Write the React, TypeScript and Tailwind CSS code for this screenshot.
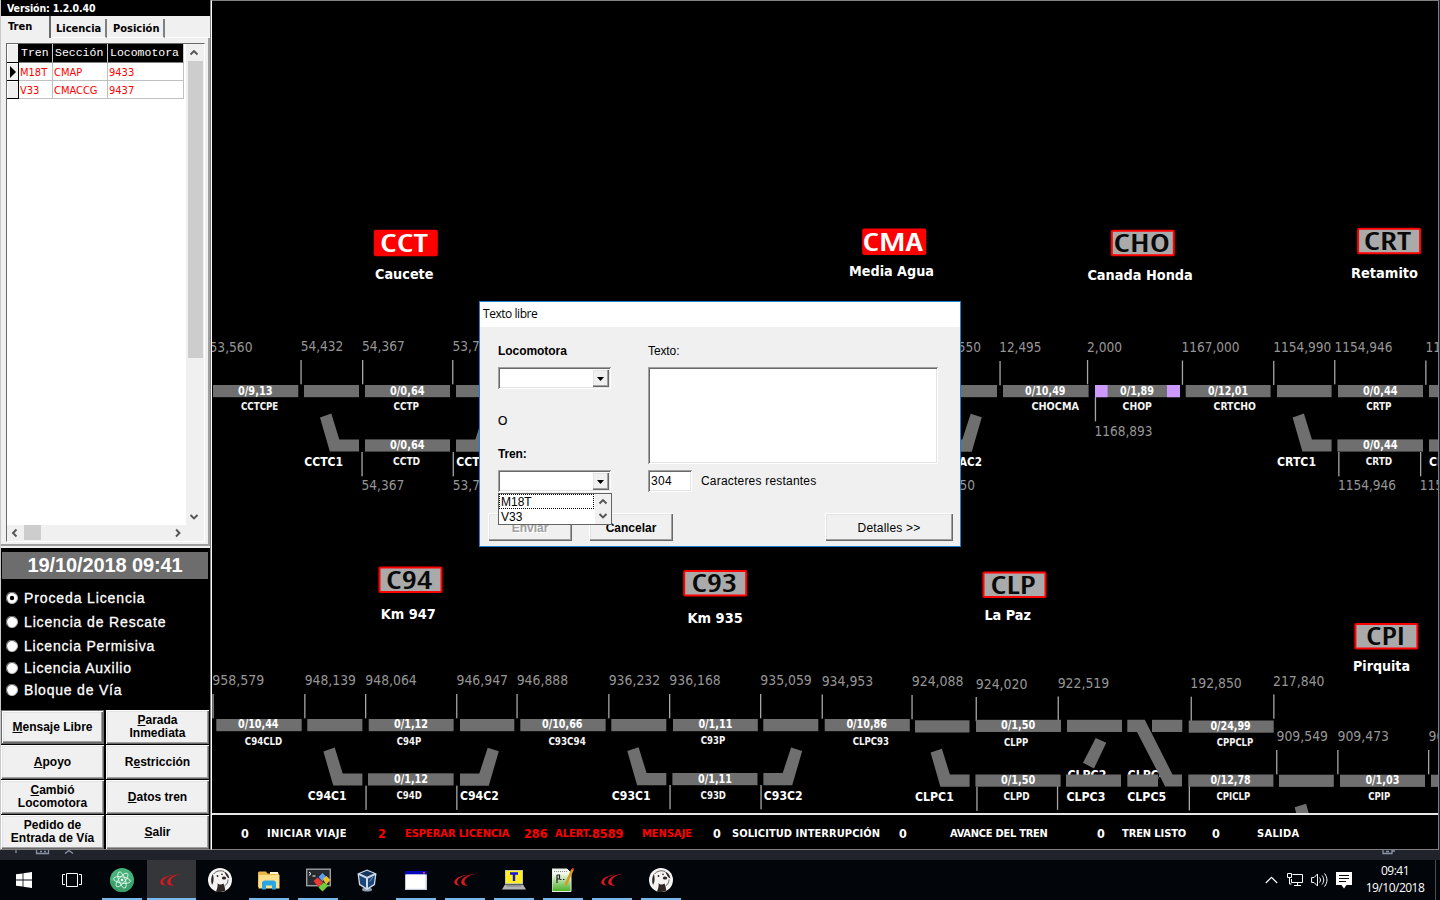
import React from "react";

const TAHOMA = "font-['DejaVu_Sans_Condensed','DejaVu_Sans',sans-serif] [font-stretch:condensed]";
const ARIAL = "font-['Liberation_Sans',Arial,sans-serif]";
const RAISED =
  "shadow-[inset_1px_1px_0_#fff,inset_-1px_-1px_0_#696969,inset_-2px_-2px_0_#a0a0a0,inset_2px_2px_0_#e3e3e3]";
const SUNKEN =
  "shadow-[inset_1px_1px_0_#a0a0a0,inset_-1px_-1px_0_#fff,inset_2px_2px_0_#696969,inset_-2px_-2px_0_#e3e3e3]";

/* ---------- track diagram ---------- */

type Txt = [string, number, number, number];

const marks: Txt[] = [
  ["53,560", 209.5, 352, 43], ["54,432", 300.7, 351.7, 42.7], ["54,367", 362, 351.7, 42.7], ["53,700", 452.5, 351.7, 42.7],
  ["12,550", 938.5, 352, 42.5], ["12,495", 999.3, 352.5, 42], ["2,000", 1087, 352, 35], ["1167,000", 1181.5, 352.3, 58],
  ["1154,990", 1273.3, 352.3, 58], ["1154,946", 1334.5, 351.8, 58], ["1152,880", 1425.5, 351.8, 58],
  ["1168,893", 1094.5, 436.6, 58], ["54,367", 361.5, 490.6, 42.7], ["53,700", 452.8, 490.6, 42.7],
  ["12,550", 932.5, 490.3, 42.5], ["1154,946", 1338, 490.3, 58], ["1152,880", 1419.8, 490.3, 58],
  ["958,579", 212.3, 685.3, 52], ["948,139", 304.7, 685.3, 51.2], ["948,064", 365.3, 685.3, 51.5], ["946,947", 456.5, 685.3, 51.5],
  ["946,888", 516.7, 685.3, 51.5], ["936,232", 608.7, 685.3, 51.5], ["936,168", 669.3, 685.3, 51.5], ["935,059", 760.3, 685.3, 51.5],
  ["934,953", 821.7, 685.8, 51.5], ["924,088", 911.7, 686.6, 51.8], ["924,020", 975.7, 688.8, 51.8], ["922,519", 1057.7, 688.4, 51.5],
  ["192,850", 1190.3, 688.4, 51.5], ["217,840", 1273, 685.8, 51.5], ["909,549", 1276.5, 741.5, 51.5], ["909,473", 1337.5, 741.2, 51.5],
  ["908,440", 1428.5, 741.2, 51.5],
];

const ticks: [number, number][] = [
  [301, 360], [362.6, 360], [452.7, 360], [1000, 361], [1087.5, 360], [1182.4, 360.5], [1273.7, 360.8], [1334.7, 360], [1425.8, 360.5],
  [1095.4, 397], [362, 452], [453.2, 452], [1338.8, 452], [1420.6, 452],
  [213, 694], [304.8, 694], [365.6, 694], [456.7, 694], [517, 694], [608.8, 694], [669.6, 694], [760.6, 694], [822.2, 694.4],
  [912, 695], [976.2, 697], [1058.2, 696.5], [1191.2, 696.7], [1273.8, 694.4], [1276.7, 750], [1337.8, 750], [1428.6, 750],
  [366, 785.6], [456.8, 785.6], [670, 785], [761, 785], [976.9, 786.6], [1057.5, 785.5], [1189.3, 786],
];

const bars: [number, number, number][] = [
  [213, 298.3, 385], [304, 359, 385], [365, 450, 385], [456, 511, 385], [930, 997, 385], [1003, 1088.6, 385], [1095, 1180, 385],
  [1185.7, 1270.6, 385], [1277, 1331.6, 385], [1338, 1423, 385], [1429, 1440, 385],
  [365, 450, 439.4], [1337.4, 1423, 439.4], [1429, 1440, 439.4],
  [216.3, 301.7, 719], [307.3, 362.4, 719], [368.7, 453.6, 719], [460, 514.3, 719], [520.3, 605.6, 719], [611.3, 666.3, 719],
  [673, 757.8, 719], [763.3, 818.3, 719], [824.7, 909.8, 719], [915, 969.5, 720.3], [976, 1061, 719.8], [1067, 1122, 719.8],
  [1152, 1182.3, 719.8], [1188.7, 1273.7, 720.5],
  [368, 453.6, 773.3], [672.4, 757.5, 773], [975.4, 1060.6, 774.5], [1066, 1121, 774.5], [1127.3, 1158, 774.5],
  [1188.3, 1273.4, 774.5], [1279, 1333.8, 774.7], [1340, 1425, 774.7], [1431, 1440, 774.7],
];

const amounts: Txt[] = [
  ["0/9,13", 238, 394.8, 34.5], ["0/0,64", 390, 394.8, 34.5], ["0/10,49", 1025, 394.8, 40.5], ["0/1,89", 1120, 394.8, 34],
  ["0/12,01", 1208, 394.8, 40], ["0/0,44", 1363, 394.8, 34.5], ["0/0,64", 390, 449.2, 34.5], ["0/0,44", 1363, 449.2, 34.5],
  ["0/10,44", 238, 728.6, 40.5], ["0/1,12", 394, 728.6, 34], ["0/10,66", 542, 728.6, 40.5], ["0/1,11", 698.4, 728.4, 34],
  ["0/10,86", 846.4, 728.6, 40.5], ["0/1,50", 1001, 729.6, 34.3], ["0/24,99", 1210.4, 730.2, 40.3], ["0/1,12", 394, 783, 34],
  ["0/1,11", 698, 783, 34], ["0/1,50", 1001, 784, 34.3], ["0/12,78", 1210.4, 784.2, 40.3], ["0/1,03", 1365.4, 784.2, 34],
];

const sections: Txt[] = [
  ["CCTCPE", 241, 410.7, 37.3], ["CCTP", 393.6, 410.7, 25.4], ["CHOCMA", 1031.4, 410.6, 47.6], ["CHOP", 1122.6, 410.6, 29.2],
  ["CRTCHO", 1213.6, 410.6, 42.2], ["CRTP", 1366.2, 410.6, 25.2], ["CCTD", 393, 465.2, 27.2], ["CRTD", 1365.8, 465, 26.4],
  ["C94CLD", 244.8, 744.8, 37.5], ["C94P", 396.8, 744.8, 24.4], ["C93C94", 548.4, 744.8, 37.4], ["C93P", 700.8, 744.6, 24.4],
  ["CLPC93", 852.8, 744.8, 36.2], ["CLPP", 1004, 745.8, 24.2], ["CPPCLP", 1216.8, 746.2, 36.4], ["C94D", 396.4, 799.2, 25.4],
  ["C93D", 700.6, 799, 25.4], ["CLPD", 1003.6, 800.2, 26], ["CPICLP", 1216.6, 800.4, 33.6], ["CPIP", 1368.2, 800.4, 22],
];

const switchNames: Txt[] = [
  ["CCTC1", 304.2, 466.2, 39], ["CCTC2", 456.2, 466.2, 39], ["CMAC2", 941, 466, 41], ["CRTC1", 1277, 466, 39],
  ["CRTC2", 1429, 466, 39], ["C94C1", 307.8, 800.2, 38.8], ["C94C2", 460, 800.2, 38.8], ["C93C1", 611.8, 800, 38.8],
  ["C93C2", 763.8, 800, 38.8], ["CLPC1", 915, 801.4, 38.8], ["CLPC3", 1066.4, 801, 39], ["CLPC5", 1127.2, 801, 39],
];

const stations: [string, string, number, number, number, number, number, number, number, boolean][] = [
  ["CCT", "Caucete", 374, 230, 381, 46.5, 375, 279, 58.5, true],
  ["CMA", "Media Agua", 862.4, 228.8, 863.4, 59, 849, 276.8, 85, true],
  ["CHO", "Canada Honda", 1111, 230, 1114.6, 54.8, 1087.4, 280, 105.4, false],
  ["CRT", "Retamito", 1357.3, 228, 1364.8, 46, 1351, 278.6, 67, false],
  ["C94", "Km 947", 378.7, 566.7, 387, 44.6, 380.8, 619, 55, false],
  ["C93", "Km 935", 683.4, 570.3, 692.4, 44, 687.4, 623.7, 55.4, false],
  ["CLP", "La Paz", 982.7, 571.7, 991.6, 43.6, 984.4, 620, 46.6, false],
  ["CPI", "Pirquita", 1354.6, 623.2, 1367, 37.5, 1353, 671, 57, false],
];

const rightLegs: [number, number][] = [[0, 0], [303.4, -0.4], [483, -334], [-4, -334]];
const leftLegs: [number, number][] = [[0, 0], [3.4, 334], [307.3, 333.7], [610.6, 335.2], [972.6, 0]];

function Labels({ items, size, fill, bold }: { items: Txt[]; size: number; fill: string; bold?: boolean }) {
  return (
    <g fontSize={size} fill={fill} fontWeight={bold ? 700 : 400}>
      {items.map(([t, x, y, w], i) => (
        <text key={i} x={x} y={y - 0.3} textLength={w} lengthAdjust="spacingAndGlyphs">{t}</text>
      ))}
    </g>
  );
}

function TrackDiagram() {
  return (
    <svg viewBox="212 2 1226 811" className={`block h-[811px] w-[1226px] bg-black ${TAHOMA}`}>
      <Labels items={marks} size={14.6} fill="#969696" />
      <g fill="#a6a6a6">
        {ticks.map(([x, y], i) => <rect key={i} x={x - 0.6} y={y} width={1.3} height={24.3} />)}
      </g>
      <Labels items={[["CLPC2", 1067.4, 779.6, 39], ["CLPC4", 1127.6, 778.8, 39]]} size={12.6} fill="#fff" bold />
      <g fill="#6f6f6f">
        {bars.map(([a, b, y], i) => <rect key={i} x={a} y={y} width={b - a} height={12.2} />)}
        {leftLegs.map(([dx, dy], i) => (
          <polygon key={i} transform={`translate(${dx} ${dy})`} points="320,417.4 331.3,413.6 339.3,439.4 359,439.4 359,451.6 329.8,451.6" />
        ))}
        {rightLegs.map(([dx, dy], i) => (
          <polygon key={i} transform={`translate(${dx} ${dy})`} points="460,773.4 479.3,773.4 487.7,747.8 498.8,751.3 488.8,785.7 460,785.7" />
        ))}
        <polygon points="1127.3,719.8 1144.8,719.8 1172.5,774.4 1182,774.4 1182,786.4 1165.2,786.4 1137,732 1127.3,732" />
        <polygon points="1095.7,738 1106.3,742.8 1094,768.4 1083,762.8" />
        <polygon points="1294.7,807.3 1306,803.7 1309,814 1296.4,814" />
      </g>
      <rect x={1095} y={385} width={12.6} height={12.2} fill="#cc99ff" />
      <rect x={1167} y={385} width={13} height={12.2} fill="#cc99ff" />
      <Labels items={amounts} size={11.6} fill="#fff" bold />
      <Labels items={sections} size={10.8} fill="#f4f4f4" bold />
      <Labels items={switchNames} size={12.8} fill="#fff" bold />
      {stations.map(([code, name, bx, by, tx, tw, nx, ny, nw, on]) => (
        <g key={code}>
          <rect x={bx + 0.8} y={by + 0.8} width={62} height={24.4} rx={1} strokeWidth={2} stroke="#ff0000" fill={on ? "#ff0000" : "#aaaaaa"} />
          <text
            x={tx - 1} y={by + 22} fontSize={25.8} textLength={tw + 1.5} lengthAdjust="spacingAndGlyphs" fontWeight={600}
            fill={on ? "#fff" : "#0a0a0a"} className="font-['Open_Sans','Noto_Sans',sans-serif]"
          >{code}</text>
          <text x={nx} y={ny - 0.5} fontSize={14} textLength={nw} lengthAdjust="spacingAndGlyphs" fontWeight={700} fill="#fff">{name}</text>
        </g>
      ))}
    </svg>
  );
}

/* ---------- left panel ---------- */

function Arrow({ dir }: { dir: "up" | "down" | "left" | "right" }) {
  const d = { up: "M1.5 6.5 5 3 8.5 6.5", down: "M1.5 3 5 6.5 8.5 3", left: "M6.5 1.5 3 5 6.5 8.5", right: "M3 1.5 6.5 5 3 8.5" }[dir];
  return (
    <svg width="10" height="10" viewBox="0 0 10 10" className="block shrink-0">
      <path d={d} fill="none" stroke="#555" strokeWidth="1.9" />
    </svg>
  );
}

function TrainGrid() {
  const head = "flex items-center border-r border-b border-r-[#c8c8c8] border-b-[#808080] bg-black pl-[2px] font-['Liberation_Mono',monospace] text-[11.5px] leading-none text-white";
  const cell = "flex items-center border-r border-b border-[#c0c0c0] pt-[2px] pl-px text-[11px] leading-none text-[#ff0000]";
  const ind = "flex items-center justify-center border-r border-b border-black bg-[#f0f0f0] shadow-[inset_1px_1px_0_#fff]";
  const rows = [["M18T", "CMAP", "9433"], ["V33", "CMACCG", "9437"]];
  return (
    <div className="flex h-[499px] w-[199px] flex-col border border-t-[#696969] border-r-white border-b-white border-l-[#696969] bg-white">
      <div className="flex h-[481px]">
        <div className="w-[179px]">
          <div className="grid h-[19px] grid-cols-[12px_34px_55px_76px]">
            <div className={ind} />
            <div className={head}>Tren</div>
            <div className={head}>Sección</div>
            <div className={head}>Locomotora</div>
          </div>
          {rows.map((r, i) => (
            <div key={r[0]} className="grid h-[18px] grid-cols-[12px_34px_55px_76px]">
              <div className={ind}>
                {i === 0 && <svg width="6" height="12" viewBox="0 0 6 12"><path d="M0 0 6 6 0 12Z" fill="#000" /></svg>}
              </div>
              {r.map((c) => <div key={c} className={`${cell} ${TAHOMA}`}>{c}</div>)}
            </div>
          ))}
        </div>
        <div className="flex w-[18px] flex-col items-center bg-[#f0f0f0]">
          <div className="flex h-[17px] items-center pr-[2px]"><Arrow dir="up" /></div>
          <div className="h-[297px] w-[15px] bg-[#cdcdcd]" />
          <div className="mt-auto flex h-[17px] items-center pr-[2px]"><Arrow dir="down" /></div>
        </div>
      </div>
      <div className="flex h-4 items-center bg-[#f0f0f0] pb-px">
        <div className="flex w-[17px] justify-center pr-[2px]"><Arrow dir="left" /></div>
        <div className="h-[15px] w-[17px] bg-[#cdcdcd]" />
        <div className="mr-[18px] ml-auto flex w-[17px] justify-center"><Arrow dir="right" /></div>
      </div>
    </div>
  );
}

function Radio({ label, on, cls }: { label: string; on?: boolean; cls: string }) {
  return (
    <div className={`flex items-center ${cls}`}>
      <svg width="12" height="12" viewBox="0 0 12 12" className="mr-[6px] shrink-0">
        <circle cx="6" cy="6" r="5.5" fill="#fff" stroke="#bdbdbd" />
        <path d="M2 9.8A5.5 5.5 0 0 1 9.8 2" fill="none" stroke="#6c6c6c" strokeWidth="1.3" />
        {on && <circle cx="6" cy="6" r="2.2" fill="#000" />}
      </svg>
      <span className="text-[14px] leading-none whitespace-nowrap text-white [-webkit-text-stroke:0.3px_white]">{label}</span>
    </div>
  );
}

function PanelButton({ k, lines, focus }: { k: number; lines: string[]; focus?: boolean }) {
  const [first, ...rest] = lines;
  return (
    <button className={`flex flex-col items-center justify-center bg-[#f0f0f0] text-[12px] leading-[13px] font-bold text-black ${RAISED} ${focus ? "border border-[#696969]" : ""}`}>
      <span className="block">
        {k < 0 ? first : <>{first.slice(0, k)}<u className="underline-offset-1">{first[k]}</u>{first.slice(k + 1)}</>}
      </span>
      {rest.map((l) => <span key={l}>{l}</span>)}
    </button>
  );
}

function SidePanel() {
  return (
    <aside className={`flex h-[850px] w-[211px] shrink-0 flex-col border-r border-b border-r-[#808080] border-b-[#808080] border-l border-l-[#c8c8c8] bg-black ${ARIAL}`}>
      <div className={`flex h-4 items-center pt-px pl-[6px] text-[10.5px] font-bold text-white ${TAHOMA}`}>
        <span className="tracking-[-0.13px]">Versión: 1.2.0.40</span>
      </div>
      <div className="h-[532px] bg-[#f0f0f0]">
        <div className={`flex h-[22px] text-[11px] font-bold ${TAHOMA}`}>
          <div className="flex w-[50px] items-center border-r-2 border-[#696969] pt-px pl-[7px]">Tren</div>
          <div className="mt-[3px] flex w-[56px] items-center border-r-2 border-b border-r-[#808080] border-b-white pt-[2px] pl-[5px]">Licencia</div>
          <div className="mt-[3px] flex w-[58px] items-center border-r-2 border-b border-r-[#808080] border-b-white pt-[2px] pl-[6px]">Posición</div>
          <div className="flex-1 border-b border-white" />
        </div>
        <div className="h-[508px] border-r-2 border-b-2 border-[#a0a0a0] pt-[5px] pl-[5px]">
          <TrainGrid />
        </div>
      </div>
      <div className="mt-1 ml-px flex h-[27px] w-[206px] items-center justify-center bg-[#6d6d6d] pb-[2px] text-[20px] font-bold tracking-[-0.1px] text-white">
        <span>19/10/2018 09:41</span>
      </div>
      <div className="flex h-[131px] flex-col pt-[9px] pl-[5px]">
        <Radio cls="h-[20px] mb-[4px] tracking-[0.88px]" label="Proceda Licencia" on />
        <Radio cls="h-[20px] mb-[4px] tracking-[0.86px]" label="Licencia de Rescate" />
        <Radio cls="h-[20px] mb-[2px] tracking-[0.8px]" label="Licencia Permisiva" />
        <Radio cls="h-[20px] mb-[2px] tracking-[0.75px]" label="Licencia Auxilio" />
        <Radio cls="h-[20px] tracking-[0.8px]" label="Bloque de Vía" />
      </div>
      <div className="grid h-[139px] grid-cols-[103px_103px] grid-rows-4 gap-x-[2px] gap-y-px">
        <PanelButton k={0} lines={["Mensaje Libre"]} focus />
        <PanelButton k={0} lines={["Parada", "Inmediata"]} />
        <PanelButton k={0} lines={["Apoyo"]} />
        <PanelButton k={1} lines={["Restricción"]} />
        <PanelButton k={0} lines={["Cambió", "Locomotora"]} />
        <PanelButton k={0} lines={["Datos tren"]} />
        <PanelButton k={-1} lines={["Pedido de", "Entrada de Vía"]} />
        <PanelButton k={0} lines={["Salir"]} />
      </div>
    </aside>
  );
}

/* ---------- status line ---------- */

function StatusLine() {
  const n = "text-[12.5px]";
  const t = "text-[11px]";
  const red = "text-[#ff0000]";
  const items: [string, string][] = [
    ["0", `w-[26px] ${n}`], ["INICIAR VIAJE", `w-[111px] tracking-[0.4px] ${t}`],
    ["2", `w-[27px] ${n} ${red}`], ["ESPERAR LICENCIA", `w-[119px] tracking-[-0.05px] ${t} ${red}`],
    ["286", `w-[31px] ${n} ${red}`], ["ALERT.", `w-[37px] ${t} ${red}`], ["8589", `w-[50px] ${n} ${red}`], ["MENSAJE", `w-[71px] ${t} ${red}`],
    ["0", `w-[19px] ${n}`], ["SOLICITUD INTERRUPCIÓN", `w-[167px] tracking-[0.07px] ${t}`],
    ["0", `w-[51px] ${n}`], ["AVANCE DEL TREN", `w-[147px] tracking-[-0.25px] ${t}`],
    ["0", `w-[25px] ${n}`], ["TREN LISTO", `w-[90px] tracking-[-0.1px] ${t}`],
    ["0", `w-[45px] ${n}`], ["SALIDA", `w-[50px] tracking-[0.3px] ${t}`],
  ];
  return (
    <div className={`flex h-[36px] items-center border-t-2 border-[#e6e6e6] bg-black pt-[5px] pl-[29px] font-bold text-white ${TAHOMA}`}>
      {items.map(([s, c], i) => <span key={i} className={`shrink-0 whitespace-nowrap ${c}`}>{s}</span>)}
    </div>
  );
}

/* ---------- dialog ---------- */

function Combo() {
  return (
    <div className={`flex h-[22px] w-[113px] justify-end bg-white p-[2px] ${SUNKEN}`}>
      <div className={`flex w-[17px] items-center justify-center bg-[#f0f0f0] pt-px ${RAISED}`}>
        <svg width="7" height="4" viewBox="0 0 7 4"><path d="M0 0H7L3.5 4Z" fill="#000" /></svg>
      </div>
    </div>
  );
}

function FreeTextDialog() {
  const btn = `flex h-7 items-center justify-center bg-[#f0f0f0] pt-px ${RAISED}`;
  return (
    <div className={`absolute top-[301px] left-[479px] flex h-[246px] w-[482px] flex-col border border-[#1a80d8] bg-[#f0f0f0] text-[12px] leading-[14px] text-black ${ARIAL}`}>
      <div className="flex h-[25px] items-center bg-white pb-px pl-[3px] font-['Open_Sans','Noto_Sans',sans-serif] text-[12px] tracking-[-0.45px]">Texto libre</div>
      <div className="flex h-[186px] pt-[17px] pl-[18px]">
        <div className="flex w-[150px] flex-col">
          <div className="mb-[9px] font-bold tracking-[-0.05px]">Locomotora</div>
          <Combo />
          <div className="mt-[25px] mb-[19px] font-medium [-webkit-text-stroke:0.2px_black]">O</div>
          <div className="mb-[9px] font-bold tracking-[-0.15px]">Tren:</div>
          <div className="relative">
            <Combo />
            <div className="absolute top-[23px] left-0 z-10 flex h-8 w-[114px] border border-[#646464] bg-white">
              <div className="flex w-[96px] flex-col">
                <div className="h-[15px] w-[95px] border border-dotted border-black pl-px leading-[14px]">M18T</div>
                <div className="h-[15px] pl-[2px] leading-[16px]">V33</div>
              </div>
              <div className="flex flex-1 flex-col items-center justify-between bg-[#f0f0f0] py-[3px] pr-px">
                <Arrow dir="up" />
                <Arrow dir="down" />
              </div>
            </div>
          </div>
        </div>
        <div className="flex flex-col">
          <div className="mb-[9px] tracking-[-0.1px]">Texto:</div>
          <div className={`h-[97px] w-[290px] bg-white ${SUNKEN}`} />
          <div className="mt-[6px] flex items-center">
            <div className={`flex h-[22px] w-[44px] items-center bg-white pl-[3px] tracking-[0.3px] ${SUNKEN}`}>304</div>
            <div className="ml-[9px] tracking-[0.2px]">Caracteres restantes</div>
          </div>
        </div>
      </div>
      <div className="flex pl-2">
        <div className={`${btn} w-[84px] font-bold text-[#a0a0a0] [text-shadow:1px_1px_0_#fff]`}>Enviar</div>
        <div className={`${btn} ml-[17px] w-[84px] font-bold`}>Cancelar</div>
        <div className={`${btn} ml-[152px] w-[128px] tracking-[0.2px]`}>Detalles &gt;&gt;</div>
      </div>
    </div>
  );
}

/* ---------- taskbar ---------- */

const swoosh = (
  <svg width="24" height="14" viewBox="0 0 24 14">
    <path d="M15 1.800C9 3 5 5.500 4.200 8.200 3.800 10.300 5.200 11.800 7.500 12.600 3.500 12.700 1 11.200 1.300 8.800 1.900 5.200 8.500 2.200 15 1.800Z" fill="#d9171e" />
    <path d="M23.500.8C17 1.600 12.300 4.600 11.500 8c-.3 2.300 1 4 4 4.800-4.800.2-7.600-1.300-7.300-4C8.900 4.500 15.500 1 23.500.8Z" fill="#d9171e" />
  </svg>
);

const beaver = (
  <svg width="24" height="24" viewBox="0 0 24 24">
    <circle cx="12" cy="12" r="12" fill="#f6f4f2" />
    <path d="M9.500 15c1.500 2 4 2 6 .5l1 2.500.8 4.600a12 12 0 0 1-9.300.8c1.200-2.400 2-5.400 1.500-8.400Z" fill="#2e2624" />
    <path d="M4.800 6C3 9 2.600 13.500 4 17c1.700-2 2.200-7 .8-11ZM16 3.500c2.800.8 5 3.500 5.300 7-2-.5-3.300-3.500-5.300-7Z" fill="#2e2624" />
    <path d="M5.500 6C8 3 12 2 16 3.500M17 17.500c2-1 3-3.500 3-6" fill="none" stroke="#2e2624" strokeWidth=".7" />
    <ellipse cx="16" cy="10" rx="2.200" ry="1.600" fill="#2e2624" />
    <circle cx="9.500" cy="8" r=".9" fill="#2e2624" /><circle cx="14" cy="6.400" r=".8" fill="#2e2624" />
  </svg>
);

const atom = (
  <svg width="24" height="24" viewBox="0 0 24 24">
    <circle cx="12" cy="12" r="12" fill="#46b17b" />
    <path d="M0 12a12 12 0 0 0 24 0c-6 4-16 5-24 0Z" fill="#3aa06c" />
    <g fill="none" stroke="#dff5e8" strokeWidth=".9">
      <ellipse cx="12" cy="12" rx="3.200" ry="8.500" transform="rotate(-20 12 12)" />
      <ellipse cx="12" cy="12" rx="3.200" ry="8.500" transform="rotate(40 12 12)" />
      <ellipse cx="12" cy="12" rx="3.200" ry="8.500" transform="rotate(100 12 12)" />
    </g>
    <circle cx="12" cy="12" r="1.300" fill="#fff" />
  </svg>
);

const folder = (
  <svg width="22" height="19" viewBox="0 0 22 19">
    <path d="M0 1.500 1 .5h7l1.500 2H21V16H0Z" fill="#e9b944" />
    <path d="M1 4h20.500v13.500H.5Z" fill="#ffe08a" />
    <path d="M12 1h8v2h-8Z" fill="#fff4cf" />
    <path d="M4 18.500V11l2-1.500h10L18 11v7.500h-4v-4H8v4Z" fill="#2aa5e6" />
  </svg>
);

const moba = (
  <svg width="25" height="24" viewBox="0 0 25 24">
    <rect x=".7" y="1.200" width="23.600" height="16.500" fill="#26292e" stroke="#9b9fa3" strokeWidth="1.400" />
    <path d="m3 4 2 1.700L3 7.400M6.500 8h3" fill="none" stroke="#fff" />
    <path d="m12.500 9 4-4 4 4-4 4.500Z" fill="#5b9df0" />
    <path d="m7.500 13 4-3.500 5.500 5-4.500 4.500Z" fill="#ec3b30" />
    <path d="m17 11 3.500-3 4 4-4.500 4.500Z" fill="#f0c02c" />
    <path d="m12.500 19.500 5-5 5 3-6 6Z" fill="#6ccf3a" />
  </svg>
);

const vbox = (
  <svg width="20" height="23" viewBox="0 0 20 23">
    <ellipse cx="10" cy="20.500" rx="5" ry="2" fill="#8e9db0" />
    <path d="M10 .5 19.500 4.500 18 16l-8 5-8-5L.5 4.500Z" fill="#cfdae8" />
    <path d="m10 1.700 7 2.800-7 3.300-7-3.300Z" fill="#16365f" />
    <path d="m2 6.300 7 3.300v9.200L3.200 15ZM18 6.300l-7 3.300v9.200L16.800 15Z" fill="#1c4677" />
    <path d="M12.500 12.500 16 8" stroke="#7ba0cf" strokeWidth="1" />
  </svg>
);

const windowIcon = (
  <svg width="22" height="19" viewBox="0 0 22 19">
    <rect width="22" height="19" fill="#c9c9dd" /><rect width="22" height="3.500" fill="#0508b8" />
    <rect x="1" y="3.500" width="19.500" height="14.300" fill="#fff" /><rect x="18" y="1" width="2" height="1.500" fill="#e04040" />
  </svg>
);

const laptop = (
  <svg width="24" height="20" viewBox="0 0 24 20">
    <rect x="3" width="18" height="14" fill="#c9c9a0" /><rect x="4" y="1" width="16" height="12" fill="#ffee22" />
    <path d="M8 3.500h8M12 3.500v7.500" stroke="#1616d8" strokeWidth="2.400" />
    <path d="M3 14.500h18l3 5H0Z" fill="#b4b4b4" /><path d="M4.500 16h15" stroke="#777" />
  </svg>
);

const notepad = (
  <svg width="22" height="24" viewBox="0 0 22 24">
    <defs><linearGradient id="np" x2="0" y2="1"><stop offset=".2" stopColor="#f4f8ee" /><stop offset="1" stopColor="#48b020" /></linearGradient></defs>
    <path d="M0 1h15l4 4v18.500H0Z" fill="url(#np)" stroke="#e5eedd" />
    <path d="M2 3.500h13" stroke="#8a8a8a" strokeDasharray="1 1" />
    <path d="M5 7v8M8 11.500h1.500M11 11.500h1.500M5 7h2.500v4H5" fill="none" stroke="#222" strokeWidth="1.200" />
    <path d="m20.500 1.500-7 15.500" stroke="#d99a20" strokeWidth="2.600" /><path d="m21.500.3-.8 1.700" stroke="#d83030" strokeWidth="2.600" />
  </svg>
);

const startIcon = (
  <svg width="16" height="16" viewBox="0 0 16 16">
    <path d="M0 2.300 6.600 1.400V7.600H0ZM7.400 1.300 16 0V7.600H7.400ZM0 8.400H6.600V14.600L0 13.700ZM7.400 8.400H16V16L7.400 14.700Z" fill="#fff" />
  </svg>
);

const viewIcon = (
  <svg width="20" height="14" viewBox="0 0 20 14">
    <path d="M4.500.5h11v13h-11ZM3 1.500H.5v10H3M17 1.500h2.500v10H17" fill="none" stroke="#fff" />
  </svg>
);

function Task({ icon, state }: { icon: React.ReactNode; state?: "open" | "active" }) {
  return (
    <div className={`flex h-10 w-[49px] shrink-0 flex-col items-center ${state === "active" ? "bg-[#343639]" : ""}`}>
      <div className="flex h-[38px] items-center pt-[2px]">{icon}</div>
      {state && <div className={`h-[2px] bg-[#76b9ed] ${state === "active" ? "w-full" : "w-10"}`} />}
    </div>
  );
}

function Taskbar() {
  return (
    <div className="flex h-10 items-center bg-[#02050a]">
      <div className="flex w-12 justify-center">{startIcon}</div>
      <div className="mr-[1.500px] flex w-12 justify-center">{viewIcon}</div>
      <Task icon={atom} state="open" />
      <Task icon={swoosh} state="active" />
      <Task icon={beaver} />
      <Task icon={folder} state="open" />
      <Task icon={moba} state="open" />
      <Task icon={vbox} />
      <Task icon={windowIcon} state="open" />
      <Task icon={swoosh} state="open" />
      <Task icon={laptop} state="open" />
      <Task icon={notepad} state="open" />
      <Task icon={swoosh} state="open" />
      <Task icon={beaver} state="open" />
      <div className="ml-auto flex items-center">
        <svg width="13" height="8" viewBox="0 0 13 8" className="mr-[9px]"><path d="M.8 7 6.500 1.300 12.200 7" fill="none" stroke="#fff" strokeWidth="1.200" /></svg>
        <svg width="17" height="14" viewBox="0 0 17 14" className="mr-[7px]">
          <path d="M5.500 1.500h10v8H4.500V6M7 12.500h7M10.500 9.500v3M.5.5h4v4h-4ZM2.500 4.500V11h2" fill="none" stroke="#fff" />
        </svg>
        <svg width="17" height="16" viewBox="0 0 17 16" className="mr-[8px]">
          <path d="M.6 5.500H3L6.500 2v12L3 10.500H.6ZM8.500 5.500c1.300 1.500 1.300 3.500 0 5M11 3.500c2.300 2.800 2.300 6.200 0 9M13.500 1.500c3.300 4 3.300 9 0 13" fill="none" stroke="#fff" />
        </svg>
        <svg width="16" height="17" viewBox="0 0 16 17" className="mr-[13px]">
          <path d="M0 0h16v13h-5.500L8 16.500 5.500 13H0Z" fill="#fff" /><path d="M3 3.500h10M3 6.500h10M3 9.500h7" stroke="#05070d" />
        </svg>
        <div className="flex w-[60px] flex-col items-center pb-[3px] font-['Open_Sans','Noto_Sans',sans-serif] text-[12px] leading-[17px] tracking-[-0.5px] text-white">
          <span>09:41</span>
          <span>19/10/2018</span>
        </div>
        <div className="ml-[10px] h-10 w-px bg-[#4a4c50]" />
        <div className="w-[4px]" />
      </div>
    </div>
  );
}

export default function App() {
  return (
    <div className="relative flex h-[900px] w-[1440px] flex-col overflow-hidden bg-[#20232b]">
      <div className="flex h-[850px]">
        <SidePanel />
        <main className="h-[850px] w-[1228px] shrink-0 border border-t-[#808080] border-r-[#808080] border-b-[#808080] border-l-white bg-black pt-px">
          <TrackDiagram />
          <StatusLine />
        </main>
      </div>
      <div className="flex h-[10px] justify-between bg-[#20232b] pr-[44px] pl-[13px]">
        <svg width="64" height="5" viewBox="0 0 64 5" fill="none" stroke="#8a93a8" strokeWidth="1.300">
          <path d="M3 0v3M23.500 0v3.500h12V0M27 1.500h2M31 1.500h2M52 3.500l4-3 4 3" />
        </svg>
        <svg width="14" height="5" viewBox="0 0 14 5" fill="none" stroke="#8a93a8" strokeWidth="1.300">
          <path d="M1 0v3.500h9V0M4 1.500h3M10 1h3" />
        </svg>
      </div>
      <Taskbar />
      <FreeTextDialog />
    </div>
  );
}
